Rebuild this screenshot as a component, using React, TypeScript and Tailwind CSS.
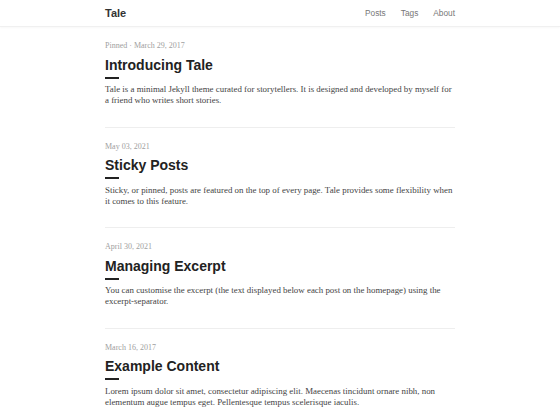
import React from "react";

const posts = [
  {
    meta: "Pinned · March 29, 2017",
    title: "Introducing Tale",
    text: "Tale is a minimal Jekyll theme curated for storytellers. It is designed and developed by myself for a friend who writes short stories.",
  },
  {
    meta: "May 03, 2021",
    title: "Sticky Posts",
    text: "Sticky, or pinned, posts are featured on the top of every page. Tale provides some flexibility when it comes to this feature.",
  },
  {
    meta: "April 30, 2021",
    title: "Managing Excerpt",
    text: "You can customise the excerpt (the text displayed below each post on the homepage) using the excerpt-separator.",
  },
  {
    meta: "March 16, 2017",
    title: "Example Content",
    text: "Lorem ipsum dolor sit amet, consectetur adipiscing elit. Maecenas tincidunt ornare nibh, non elementum augue tempus eget. Pellentesque tempus scelerisque iaculis.",
  },
];

export default function App() {
  return (
    <div className="w-[560px] h-[420px] overflow-hidden bg-white">
      <header className="h-[27px] border-b border-[#f0f0f0] shadow-[0_1px_2px_rgba(0,0,0,0.03)]">
        <div className="w-[350px] mx-auto h-full flex items-center justify-between">
          <span className="font-['Liberation_Sans',Arial,sans-serif] font-bold text-[11px] text-[#333] leading-none">
            Tale
          </span>
          <nav className="flex gap-[15px] font-['Liberation_Sans',Arial,sans-serif] text-[8.3px] text-[#777] leading-none">
            <span>Posts</span>
            <span>Tags</span>
            <span>About</span>
          </nav>
        </div>
      </header>
      <main className="w-[350px] mx-auto pt-[13px]">
        {posts.map((p, i) => (
          <article
            key={i}
            className={i < posts.length - 1 ? "border-b border-[#eee] pb-[20.5px] mb-[13px]" : ""}
          >
            <div className="font-['Liberation_Serif','Times_New_Roman',serif] text-[8px] leading-[12px] text-[#a0a0a0]">
              {p.meta}
            </div>
            <h2 className="mt-[3.5px] font-['Liberation_Sans',Arial,sans-serif] font-bold text-[14px] leading-[18px] text-[#222]">
              {p.title}
            </h2>
            <div className="mt-[3px] w-[14px] h-[2px] bg-[#222]" />
            <p className="mt-[5.5px] font-['Liberation_Serif','Times_New_Roman',serif] text-[8.9px] leading-[11px] text-[#444]">
              {p.text}
            </p>
          </article>
        ))}
      </main>
    </div>
  );
}
